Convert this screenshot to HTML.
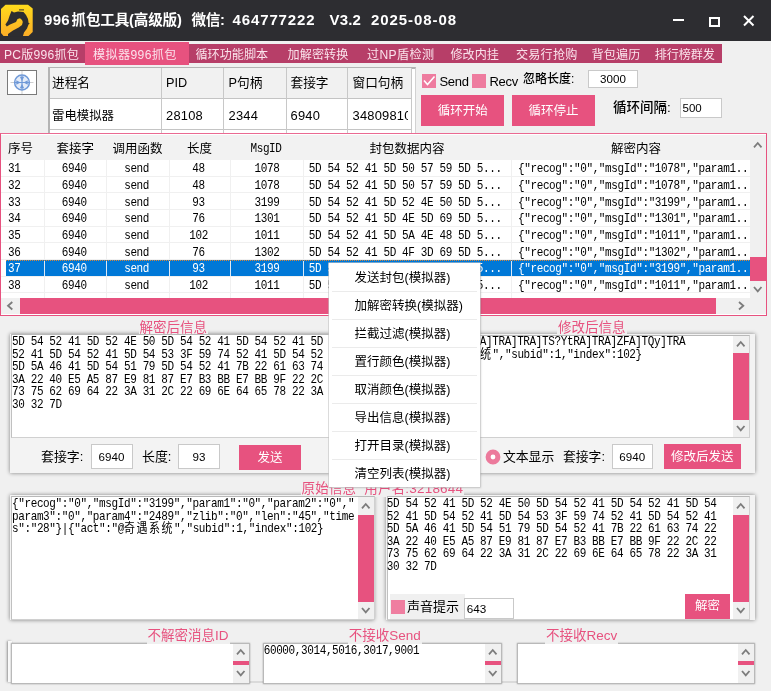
<!DOCTYPE html>
<html lang="zh-CN"><head><meta charset="utf-8"><title>996抓包工具</title>
<style>
html,body{margin:0;padding:0;}
body{will-change:transform;width:771px;height:691px;overflow:hidden;background:#f0f0f0;position:relative;font-family:"Liberation Sans","Noto Sans CJK SC",sans-serif;}
.t{position:absolute;white-space:pre;line-height:16px;height:16px;color:#000;}
.ui{font-size:12.5px;}
.mono{font-family:"Liberation Mono","Noto Sans CJK SC",monospace;font-size:11px;letter-spacing:-0.38px;line-height:12.5px;height:12.5px;transform:scaleY(1.14);}
.mono .cj{letter-spacing:1.5px;font-size:11px;}
.pink{color:#e7527f;}
.w{color:#fff;}
.btn{position:absolute;background:#e7527f;color:#fff;text-align:center;font-size:12.5px;}
.inp{position:absolute;background:#fff;border:1px solid #c9c9c9;box-sizing:border-box;font-size:11.6px;}
.ta{position:absolute;background:#fff;box-sizing:border-box;border:1px solid #d0d0d0;border-top-color:#b8b8b8;border-left-color:#c0c0c0;}
.sb{position:absolute;background:#f0f0f0;}
.th{position:absolute;background:#e7527f;}
</style></head><body>

<div style="position:absolute;left:0px;top:0px;width:771px;height:41px;background:#2d2d31;"></div>
<svg style="position:absolute;left:0px;top:0px" width="36" height="41" viewBox="0 0 36 41">
<defs><linearGradient id="g" x1="0" y1="0" x2="0" y2="1"><stop offset="0" stop-color="#ffdb1c"/><stop offset="1" stop-color="#fbad27"/></linearGradient></defs>
<path d="M5.5 4.7 H28 L32.7 8.5 V32 L28.5 36 H3.5 L1 33 V9 Z" fill="url(#g)"/>
<path d="M11.5 11 L14 12.6 L18 11.5 L23.5 12 L26 15 L28 19 L28.6 23 L29.8 23.6 L28.5 24.6 L27 28.5 L24 32.5 L22.8 36.6 H8 V34 L13 30.5 L18.7 27.5 L22 25 L22.8 22 L22 20 L20 18.2 L17.5 19 L16 22 L10 24.6 L6.8 26.6 L5.4 24.6 L8 20.5 L9.5 16 Z" fill="#2d2d31"/>
<rect x="19" y="9.4" width="5" height="1" fill="#2d2d31"/>
</svg>
<div class="t" style="left:44px;top:9px;height:22px;line-height:22px;color:#fff;font-weight:bold;font-size:15px;letter-spacing:0.33px;">996</div>
<div class="t" style="left:71.5px;top:9px;height:22px;line-height:22px;color:#fff;font-weight:bold;font-size:14.6px;letter-spacing:-0.2px;">抓包工具(高级版)</div>
<div class="t" style="left:191.5px;top:9px;height:22px;line-height:22px;color:#fff;font-weight:bold;font-size:14.6px;letter-spacing:-0.4px;">微信:</div>
<div class="t" style="left:232.5px;top:9px;height:22px;line-height:22px;color:#fff;font-weight:bold;font-size:15px;letter-spacing:0.88px;">464777222</div>
<div class="t" style="left:329.5px;top:9px;height:22px;line-height:22px;color:#fff;font-weight:bold;font-size:15px;letter-spacing:0.16px;">V3.2</div>
<div class="t" style="left:371px;top:9px;height:22px;line-height:22px;color:#fff;font-weight:bold;font-size:15px;letter-spacing:0.93px;">2025-08-08</div>
<div style="position:absolute;left:673px;top:18.8px;width:11px;height:2.6px;background:#fff;"></div>
<div style="position:absolute;left:708.5px;top:17px;width:11px;height:10px;border:2px solid #fff;box-sizing:border-box;"></div>
<svg style="position:absolute;left:741.5px;top:14px" width="14" height="14"><path d="M2 2 L11.5 11.5 M11.5 2 L2 11.5" stroke="#fff" stroke-width="2" fill="none"/></svg>
<div style="position:absolute;left:0px;top:41px;width:771px;height:3px;background:#f0f0f0;"></div>
<div style="position:absolute;left:0px;top:44px;width:722px;height:19px;background:#b73e68;"></div>
<div style="position:absolute;left:85px;top:42px;width:104px;height:23px;background:#e7527f;"></div>
<div class="t ui" style="left:4px;top:46.8px;color:#fbe3ec;font-size:12.1px;letter-spacing:0.22px;">PC版996抓包</div>
<div class="t ui" style="left:93px;top:46.8px;color:#fbe3ec;font-size:12.1px;letter-spacing:0.4px;">模拟器996抓包</div>
<div class="t ui" style="left:195.5px;top:46.8px;color:#fbe3ec;font-size:12.1px;letter-spacing:0px;">循环功能脚本</div>
<div class="t ui" style="left:287.5px;top:46.8px;color:#fbe3ec;font-size:12.1px;letter-spacing:0.1px;">加解密转换</div>
<div class="t ui" style="left:367px;top:46.8px;color:#fbe3ec;font-size:12.1px;letter-spacing:0.38px;">过NP盾检测</div>
<div class="t ui" style="left:450.5px;top:46.8px;color:#fbe3ec;font-size:12.1px;letter-spacing:0px;">修改内挂</div>
<div class="t ui" style="left:516px;top:46.8px;color:#fbe3ec;font-size:12.1px;letter-spacing:0.2px;">交易行抢购</div>
<div class="t ui" style="left:591.6px;top:46.8px;color:#fbe3ec;font-size:12.1px;letter-spacing:0.15px;">背包遍历</div>
<div class="t ui" style="left:654.8px;top:46.8px;color:#fbe3ec;font-size:12.1px;letter-spacing:-0.1px;">排行榜群发</div>
<div style="position:absolute;left:7.3px;top:70px;width:29.4px;height:24.7px;background:#fff;border:1px solid #7a7a7a;box-sizing:border-box;"></div>
<svg style="position:absolute;left:8px;top:71px" width="27" height="23" viewBox="0 0 27 23">
<line x1="2.5" y1="11.5" x2="25.5" y2="11.5" stroke="#cfcfcf" stroke-width="1"/><line x1="14" y1="0" x2="14" y2="23" stroke="#cfcfcf" stroke-width="1"/>
<circle cx="14" cy="11.5" r="7.4" fill="#e4ecf8" stroke="#6f99d8" stroke-width="1.5"/>
<path d="M14 4.5 V18.5 M7 11.5 H21" stroke="#6f99d8" stroke-width="1.2"/>
<path d="M14 10 l-2.2 -4.2 h4.4 z M14 13 l-2.2 4.2 h4.4 z M12.5 11.5 l-4.2 -2.2 v4.4 z M15.5 11.5 l4.2 -2.2 v4.4 z" fill="#6f99d8"/>
</svg>
<div style="position:absolute;left:48.3px;top:67px;width:367.7px;height:66.5px;background:#fff;border:2px solid #b4b4b4;border-bottom:none;border-right:1px solid #d2d2d2;box-sizing:border-box;"></div>
<div style="position:absolute;left:50px;top:68px;width:361px;height:30px;background:#f1f1f1;"></div>
<div style="position:absolute;left:50px;top:98px;width:361px;height:1px;background:#c4c4c4;"></div>
<div style="position:absolute;left:50px;top:129.3px;width:361px;height:1px;background:#c4c4c4;"></div>
<div style="position:absolute;left:160.7px;top:68px;width:1px;height:65.5px;background:#c8c8c8;"></div>
<div style="position:absolute;left:223px;top:68px;width:1px;height:65.5px;background:#c8c8c8;"></div>
<div style="position:absolute;left:285.5px;top:68px;width:1px;height:65.5px;background:#c8c8c8;"></div>
<div style="position:absolute;left:347px;top:68px;width:1px;height:65.5px;background:#c8c8c8;"></div>
<div style="position:absolute;left:410.5px;top:68px;width:1px;height:65.5px;background:#c8c8c8;"></div>
<div class="t ui" style="left:52px;top:75px;font-size:12.7px;">进程名</div>
<div class="t ui" style="left:52px;top:107.7px;font-size:12.9px;letter-spacing:0.22px;overflow:hidden;max-width:355.5px;"><span style="font-size:12.4px;letter-spacing:0">雷电模拟器</span></div>
<div class="t ui" style="left:166px;top:75px;font-size:12.7px;">PID</div>
<div class="t ui" style="left:166px;top:107.7px;font-size:12.9px;letter-spacing:0.22px;overflow:hidden;max-width:241.5px;">28108</div>
<div class="t ui" style="left:228.5px;top:75px;font-size:12.7px;">P句柄</div>
<div class="t ui" style="left:228.5px;top:107.7px;font-size:12.9px;letter-spacing:0.22px;overflow:hidden;max-width:179.0px;">2344</div>
<div class="t ui" style="left:290.5px;top:75px;font-size:12.7px;">套接字</div>
<div class="t ui" style="left:290.5px;top:107.7px;font-size:12.9px;letter-spacing:0.22px;overflow:hidden;max-width:117.0px;">6940</div>
<div class="t ui" style="left:352.5px;top:75px;font-size:12.7px;">窗口句柄</div>
<div class="t ui" style="left:352.5px;top:107.7px;font-size:12.9px;letter-spacing:0.22px;overflow:hidden;max-width:55.0px;">34809810</div>
<div style="position:absolute;left:422px;top:73.5px;width:14.3px;height:14.3px;background:#ee7c9f;"></div>
<svg style="position:absolute;left:422px;top:74px" width="14" height="14"><path d="M2 6.5 L5.5 10.5 L12.5 2.5" stroke="#fff" stroke-width="1.6" fill="none"/></svg>
<div class="t ui" style="left:439.5px;top:73.5px;font-size:13px;letter-spacing:-0.3px;">Send</div>
<div style="position:absolute;left:472px;top:73.5px;width:14.3px;height:14.3px;background:#ee7c9f;"></div>
<div class="t ui" style="left:489.5px;top:73.5px;font-size:13px;letter-spacing:-0.3px;">Recv</div>
<div class="t ui" style="left:523px;top:71px;font-size:12px;font-weight:500;">忽略长度:</div>
<div class="inp" style="left:588px;top:70px;width:50px;height:18px;line-height:16px;text-align:center;">3000</div>
<div class="btn" style="left:421px;top:95px;width:83.3px;height:30.7px;line-height:33px;">循环开始</div>
<div class="btn" style="left:512px;top:95px;width:83px;height:30.7px;line-height:33px;">循环停止</div>
<div class="t ui" style="left:613px;top:100px;font-size:13.5px;font-weight:500;">循环间隔:</div>
<div class="inp" style="left:680px;top:98px;width:42px;height:20px;line-height:18px;padding-left:1.5px;font-size:11.5px;">500</div>
<div style="position:absolute;left:0px;top:133px;width:767px;height:182.5px;background:#fff;border:1px solid #e7527f;border-top:1.5px solid #ea6a92;box-sizing:border-box;"></div>
<div style="position:absolute;left:1px;top:134.5px;width:749px;height:25.5px;background:#f2f2f2;"></div>
<div style="position:absolute;left:1px;top:176px;width:749px;height:1px;background:#f0f0f0;"></div>
<div style="position:absolute;left:1px;top:192px;width:749px;height:1px;background:#f0f0f0;"></div>
<div style="position:absolute;left:1px;top:209px;width:749px;height:1px;background:#f0f0f0;"></div>
<div style="position:absolute;left:1px;top:226px;width:749px;height:1px;background:#f0f0f0;"></div>
<div style="position:absolute;left:1px;top:242px;width:749px;height:1px;background:#f0f0f0;"></div>
<div style="position:absolute;left:1px;top:259px;width:749px;height:1px;background:#f0f0f0;"></div>
<div style="position:absolute;left:1px;top:276px;width:749px;height:1px;background:#f0f0f0;"></div>
<div style="position:absolute;left:1px;top:292px;width:749px;height:1px;background:#f0f0f0;"></div>
<div style="position:absolute;left:44.3px;top:160px;width:1px;height:138px;background:#f0f0f0;"></div>
<div style="position:absolute;left:106.3px;top:160px;width:1px;height:138px;background:#f0f0f0;"></div>
<div style="position:absolute;left:168.6px;top:160px;width:1px;height:138px;background:#f0f0f0;"></div>
<div style="position:absolute;left:230.3px;top:160px;width:1px;height:138px;background:#f0f0f0;"></div>
<div style="position:absolute;left:302.7px;top:160px;width:1px;height:138px;background:#f0f0f0;"></div>
<div style="position:absolute;left:510.5px;top:160px;width:1px;height:138px;background:#f0f0f0;"></div>
<div style="position:absolute;left:6px;top:260px;width:744px;height:15.8px;background:#0078d7;"></div>
<div style="position:absolute;left:44.3px;top:260px;width:1px;height:15.8px;background:#dce9f7;"></div>
<div style="position:absolute;left:106.3px;top:260px;width:1px;height:15.8px;background:#dce9f7;"></div>
<div style="position:absolute;left:168.6px;top:260px;width:1px;height:15.8px;background:#dce9f7;"></div>
<div style="position:absolute;left:230.3px;top:260px;width:1px;height:15.8px;background:#dce9f7;"></div>
<div style="position:absolute;left:302.7px;top:260px;width:1px;height:15.8px;background:#dce9f7;"></div>
<div style="position:absolute;left:510.5px;top:260px;width:1px;height:15.8px;background:#dce9f7;"></div>
<div style="position:absolute;left:6px;top:260px;width:744px;height:1px;background:repeating-linear-gradient(90deg,#d8873a 0 1px,#0078d7 1px 2px);"></div>
<div class="t ui" style="left:8px;top:140.5px;">序号</div>
<div class="t ui" style="left:-74.7px;width:300px;text-align:center;top:140.5px;">套接字</div>
<div class="t ui" style="left:-12.599999999999994px;width:300px;text-align:center;top:140.5px;">调用函数</div>
<div class="t ui" style="left:49.400000000000006px;width:300px;text-align:center;top:140.5px;">长度</div>
<div class="t ui" style="left:257px;width:300px;text-align:center;top:140.5px;">封包数据内容</div>
<div class="t ui" style="left:486px;width:300px;text-align:center;top:140.5px;">解密内容</div>
<div class="t mono" style="left:116px;width:300px;text-align:center;top:142.5px;">MsgID</div>
<div class="t mono" style="left:8px;top:163.4px;">31</div>
<div class="t mono" style="left:-75.8px;width:300px;text-align:center;top:163.4px;">6940</div>
<div class="t mono" style="left:-13.400000000000006px;width:300px;text-align:center;top:163.4px;">send</div>
<div class="t mono" style="left:48.599999999999994px;width:300px;text-align:center;top:163.4px;">48</div>
<div class="t mono" style="left:117px;width:300px;text-align:center;top:163.4px;">1078</div>
<div class="t mono" style="left:308.8px;top:163.4px;">5D 54 52 41 5D 50 57 59 5D 5...</div>
<div class="t mono" style="left:518px;top:163.4px;">{"recog":"0","msgId":"1078","param1..</div>
<div class="t mono" style="left:8px;top:180.06666666666666px;">32</div>
<div class="t mono" style="left:-75.8px;width:300px;text-align:center;top:180.06666666666666px;">6940</div>
<div class="t mono" style="left:-13.400000000000006px;width:300px;text-align:center;top:180.06666666666666px;">send</div>
<div class="t mono" style="left:48.599999999999994px;width:300px;text-align:center;top:180.06666666666666px;">48</div>
<div class="t mono" style="left:117px;width:300px;text-align:center;top:180.06666666666666px;">1078</div>
<div class="t mono" style="left:308.8px;top:180.06666666666666px;">5D 54 52 41 5D 50 57 59 5D 5...</div>
<div class="t mono" style="left:518px;top:180.06666666666666px;">{"recog":"0","msgId":"1078","param1..</div>
<div class="t mono" style="left:8px;top:196.73333333333335px;">33</div>
<div class="t mono" style="left:-75.8px;width:300px;text-align:center;top:196.73333333333335px;">6940</div>
<div class="t mono" style="left:-13.400000000000006px;width:300px;text-align:center;top:196.73333333333335px;">send</div>
<div class="t mono" style="left:48.599999999999994px;width:300px;text-align:center;top:196.73333333333335px;">93</div>
<div class="t mono" style="left:117px;width:300px;text-align:center;top:196.73333333333335px;">3199</div>
<div class="t mono" style="left:308.8px;top:196.73333333333335px;">5D 54 52 41 5D 52 4E 50 5D 5...</div>
<div class="t mono" style="left:518px;top:196.73333333333335px;">{"recog":"0","msgId":"3199","param1..</div>
<div class="t mono" style="left:8px;top:213.4px;">34</div>
<div class="t mono" style="left:-75.8px;width:300px;text-align:center;top:213.4px;">6940</div>
<div class="t mono" style="left:-13.400000000000006px;width:300px;text-align:center;top:213.4px;">send</div>
<div class="t mono" style="left:48.599999999999994px;width:300px;text-align:center;top:213.4px;">76</div>
<div class="t mono" style="left:117px;width:300px;text-align:center;top:213.4px;">1301</div>
<div class="t mono" style="left:308.8px;top:213.4px;">5D 54 52 41 5D 4E 5D 69 5D 5...</div>
<div class="t mono" style="left:518px;top:213.4px;">{"recog":"0","msgId":"1301","param1..</div>
<div class="t mono" style="left:8px;top:230.0666666666667px;">35</div>
<div class="t mono" style="left:-75.8px;width:300px;text-align:center;top:230.0666666666667px;">6940</div>
<div class="t mono" style="left:-13.400000000000006px;width:300px;text-align:center;top:230.0666666666667px;">send</div>
<div class="t mono" style="left:48.599999999999994px;width:300px;text-align:center;top:230.0666666666667px;">102</div>
<div class="t mono" style="left:117px;width:300px;text-align:center;top:230.0666666666667px;">1011</div>
<div class="t mono" style="left:308.8px;top:230.0666666666667px;">5D 54 52 41 5D 5A 4E 48 5D 5...</div>
<div class="t mono" style="left:518px;top:230.0666666666667px;">{"recog":"0","msgId":"1011","param1..</div>
<div class="t mono" style="left:8px;top:246.73333333333335px;">36</div>
<div class="t mono" style="left:-75.8px;width:300px;text-align:center;top:246.73333333333335px;">6940</div>
<div class="t mono" style="left:-13.400000000000006px;width:300px;text-align:center;top:246.73333333333335px;">send</div>
<div class="t mono" style="left:48.599999999999994px;width:300px;text-align:center;top:246.73333333333335px;">76</div>
<div class="t mono" style="left:117px;width:300px;text-align:center;top:246.73333333333335px;">1302</div>
<div class="t mono" style="left:308.8px;top:246.73333333333335px;">5D 54 52 41 5D 4F 3D 69 5D 5...</div>
<div class="t mono" style="left:518px;top:246.73333333333335px;">{"recog":"0","msgId":"1302","param1..</div>
<div class="t mono w" style="left:8px;top:263.4px;">37</div>
<div class="t mono w" style="left:-75.8px;width:300px;text-align:center;top:263.4px;">6940</div>
<div class="t mono w" style="left:-13.400000000000006px;width:300px;text-align:center;top:263.4px;">send</div>
<div class="t mono w" style="left:48.599999999999994px;width:300px;text-align:center;top:263.4px;">93</div>
<div class="t mono w" style="left:117px;width:300px;text-align:center;top:263.4px;">3199</div>
<div class="t mono w" style="left:308.8px;top:263.4px;">5D 54 52 41 5D 52 4E 50 5D 5...</div>
<div class="t mono w" style="left:518px;top:263.4px;">{"recog":"0","msgId":"3199","param1..</div>
<div class="t mono" style="left:8px;top:280.06666666666666px;">38</div>
<div class="t mono" style="left:-75.8px;width:300px;text-align:center;top:280.06666666666666px;">6940</div>
<div class="t mono" style="left:-13.400000000000006px;width:300px;text-align:center;top:280.06666666666666px;">send</div>
<div class="t mono" style="left:48.599999999999994px;width:300px;text-align:center;top:280.06666666666666px;">102</div>
<div class="t mono" style="left:117px;width:300px;text-align:center;top:280.06666666666666px;">1011</div>
<div class="t mono" style="left:308.8px;top:280.06666666666666px;">5D 54 52 41 5D 5A 4E 48 5D 5...</div>
<div class="t mono" style="left:518px;top:280.06666666666666px;">{"recog":"0","msgId":"1011","param1..</div>
<div class="sb" style="left:750px;top:134.5px;width:16px;height:164px;"></div>
<div class="th" style="left:750px;top:257px;width:16px;height:23.5px;"></div>
<svg style="position:absolute;left:753.25px;top:141.85px;overflow:visible" width="9.5" height="6.3"><polyline transform="translate(1,1)" points="0,4.3 3.75,0 7.5,4.3" fill="none" stroke="#7c7c7c" stroke-width="1.8"/></svg>
<svg style="position:absolute;left:753.25px;top:285.85px;overflow:visible" width="9.5" height="6.3"><polyline transform="translate(1,1)" points="0,0 3.75,4.3 7.5,0" fill="none" stroke="#7c7c7c" stroke-width="1.8"/></svg>
<div class="sb" style="left:1px;top:298px;width:765px;height:16px;"></div>
<div class="th" style="left:20px;top:298px;width:696px;height:15.8px;"></div>
<svg style="position:absolute;left:7.35px;top:301.25px;overflow:visible" width="6.3" height="9.5"><polyline transform="translate(1,1)" points="4.3,0 0,3.75 4.3,7.5" fill="none" stroke="#7c7c7c" stroke-width="1.8"/></svg>
<svg style="position:absolute;left:737.85px;top:301.25px;overflow:visible" width="6.3" height="9.5"><polyline transform="translate(1,1)" points="0,0 4.3,3.75 0,7.5" fill="none" stroke="#7c7c7c" stroke-width="1.8"/></svg>
<div style="position:absolute;left:10px;top:333.5px;width:364px;height:139.5px;background:#f3f3f3;box-shadow:0 0 4px rgba(0,0,0,0.48);"></div>
<div style="position:absolute;left:386px;top:334px;width:368.5px;height:139px;background:#f3f3f3;box-shadow:0 0 4px rgba(0,0,0,0.48);"></div>
<div class="t ui pink" style="left:138.5px;top:319.6px;font-size:13.5px;background:#f0f0f0;padding:0 1px;">解密后信息</div>
<div class="t ui pink" style="left:557px;top:319.6px;font-size:13.5px;background:#f0f0f0;padding:0 1px;">修改后信息</div>
<div class="ta" style="left:11px;top:334px;width:363px;height:104px;"></div>
<div class="ta" style="left:387px;top:334.5px;width:363px;height:103.5px;"></div>
<div class="t mono" style="left:12px;top:336.3px;">5D 54 52 41 5D 52 4E 50 5D 54 52 41 5D 54 52 41 5D</div>
<div class="t mono" style="left:12px;top:348.8px;">52 41 5D 54 52 41 5D 54 53 3F 59 74 52 41 5D 54 52</div>
<div class="t mono" style="left:12px;top:361.3px;">5D 5A 46 41 5D 54 51 79 5D 54 52 41 7B 22 61 63 74</div>
<div class="t mono" style="left:12px;top:373.8px;">3A 22 40 E5 A5 87 E9 81 87 E7 B3 BB E7 BB 9F 22 2C</div>
<div class="t mono" style="left:12px;top:386.3px;">73 75 62 69 64 22 3A 31 2C 22 69 6E 64 65 78 22 3A</div>
<div class="t mono" style="left:12px;top:398.8px;">30 32 7D</div>
<div class="t mono" style="left:386.5px;top:336.3px;">]TRA]RNP]TRA]TRA]TRA]TRA]TS?YtRA]TRA]ZFA]TQy]TRA</div>
<div class="t mono" style="left:386.5px;top:348.8px;">{"act":"@<span class="cj">奇遇系统</span>","subid":1,"index":102}</div>
<div class="sb" style="left:733px;top:335.5px;width:16px;height:101.5px;"></div>
<div class="th" style="left:733px;top:353px;width:16px;height:66.5px;"></div>
<svg style="position:absolute;left:736.25px;top:340.85px;overflow:visible" width="9.5" height="6.3"><polyline transform="translate(1,1)" points="0,4.3 3.75,0 7.5,4.3" fill="none" stroke="#7c7c7c" stroke-width="1.8"/></svg>
<svg style="position:absolute;left:736.25px;top:424.85px;overflow:visible" width="9.5" height="6.3"><polyline transform="translate(1,1)" points="0,0 3.75,4.3 7.5,0" fill="none" stroke="#7c7c7c" stroke-width="1.8"/></svg>
<div class="t ui" style="left:41px;top:449px;font-size:12.9px;">套接字:</div>
<div class="inp" style="left:90.5px;top:444px;width:42px;height:25px;line-height:23px;text-align:center;">6940</div>
<div class="t ui" style="left:142px;top:449px;font-size:12.9px;">长度:</div>
<div class="inp" style="left:178px;top:444px;width:42px;height:25px;line-height:23px;text-align:center;">93</div>
<div class="btn" style="left:238.7px;top:445px;width:62.5px;height:25px;line-height:27px;">发送</div>
<svg style="position:absolute;left:485.2px;top:448.9px" width="16" height="16"><circle cx="8" cy="8" r="4.9" fill="#fff" stroke="#ec7a9c" stroke-width="5"/></svg>
<div class="t ui" style="left:503px;top:449px;font-size:12.8px;">文本显示</div>
<div class="t ui" style="left:563px;top:449px;font-size:12.8px;">套接字:</div>
<div class="inp" style="left:611.5px;top:443.8px;width:41.5px;height:25px;line-height:23px;text-align:center;">6940</div>
<div class="btn" style="left:663.5px;top:443.8px;width:77.5px;height:25px;line-height:26.5px;">修改后发送</div>
<div style="position:absolute;left:9.5px;top:495px;width:364.5px;height:125px;background:#f3f3f3;box-shadow:0 0 4px rgba(0,0,0,0.48);"></div>
<div style="position:absolute;left:385.5px;top:495px;width:369px;height:125px;background:#f3f3f3;box-shadow:0 0 4px rgba(0,0,0,0.48);"></div>
<div class="t ui pink" style="left:300.5px;top:480.5px;font-size:13.5px;letter-spacing:0.2px;background:#f0f0f0;padding:0 1px;">原始信息  用户名:3218644</div>
<div class="ta" style="left:10.5px;top:496px;width:364px;height:124px;"></div>
<div class="ta" style="left:387px;top:496px;width:363px;height:124px;"></div>
<div class="t mono" style="left:12px;top:498.3px;">{"recog":"0","msgId":"3199","param1":"0","param2":"0","</div>
<div class="t mono" style="left:12px;top:510.8px;">param3":"0","param4":"2489","zlib":"0","len":"45","time</div>
<div class="t mono" style="left:12px;top:523.3px;">s":"28"}|{"act":"@<span class="cj">奇遇系统</span>","subid":1,"index":102}</div>
<div class="sb" style="left:358px;top:497px;width:15.5px;height:122px;"></div>
<div class="th" style="left:358px;top:514.5px;width:15.5px;height:87.5px;"></div>
<svg style="position:absolute;left:361.25px;top:502.85px;overflow:visible" width="9.5" height="6.3"><polyline transform="translate(1,1)" points="0,4.3 3.75,0 7.5,4.3" fill="none" stroke="#7c7c7c" stroke-width="1.8"/></svg>
<svg style="position:absolute;left:361.25px;top:606.85px;overflow:visible" width="9.5" height="6.3"><polyline transform="translate(1,1)" points="0,0 3.75,4.3 7.5,0" fill="none" stroke="#7c7c7c" stroke-width="1.8"/></svg>
<div class="t mono" style="left:386.8px;top:498.3px;">5D 54 52 41 5D 52 4E 50 5D 54 52 41 5D 54 52 41 5D 54</div>
<div class="t mono" style="left:386.8px;top:510.8px;">52 41 5D 54 52 41 5D 54 53 3F 59 74 52 41 5D 54 52 41</div>
<div class="t mono" style="left:386.8px;top:523.3px;">5D 5A 46 41 5D 54 51 79 5D 54 52 41 7B 22 61 63 74 22</div>
<div class="t mono" style="left:386.8px;top:535.8px;">3A 22 40 E5 A5 87 E9 81 87 E7 B3 BB E7 BB 9F 22 2C 22</div>
<div class="t mono" style="left:386.8px;top:548.3px;">73 75 62 69 64 22 3A 31 2C 22 69 6E 64 65 78 22 3A 31</div>
<div class="t mono" style="left:386.8px;top:560.8px;">30 32 7D</div>
<div class="sb" style="left:733px;top:497px;width:16px;height:122px;"></div>
<div class="th" style="left:733px;top:514.5px;width:16px;height:87px;"></div>
<svg style="position:absolute;left:736.25px;top:502.85px;overflow:visible" width="9.5" height="6.3"><polyline transform="translate(1,1)" points="0,4.3 3.75,0 7.5,4.3" fill="none" stroke="#7c7c7c" stroke-width="1.8"/></svg>
<svg style="position:absolute;left:736.25px;top:606.85px;overflow:visible" width="9.5" height="6.3"><polyline transform="translate(1,1)" points="0,0 3.75,4.3 7.5,0" fill="none" stroke="#7c7c7c" stroke-width="1.8"/></svg>
<div style="position:absolute;left:389.5px;top:594px;width:75px;height:25px;background:#f0f0f0;"></div>
<div style="position:absolute;left:391px;top:599.5px;width:14px;height:14.5px;background:#ef7ea0;"></div>
<div class="t ui" style="left:407px;top:598.5px;font-size:13px;">声音提示</div>
<div class="inp" style="left:463.7px;top:598px;width:50px;height:20.5px;line-height:19px;padding-left:2px;font-size:11.7px;">643</div>
<div class="btn" style="left:685px;top:594px;width:45px;height:25px;line-height:25px;">解密</div>
<div style="position:absolute;left:7.5px;top:641px;width:4px;height:41px;background:#fafafa;box-shadow:-1px 0 2.5px rgba(0,0,0,0.4);"></div>
<div style="position:absolute;left:249px;top:681.3px;width:15px;height:2.2px;background:#dadada;"></div>
<div style="position:absolute;left:501.5px;top:681.3px;width:15.5px;height:2.2px;background:#dadada;"></div>
<div class="ta" style="left:11px;top:642.7px;width:239px;height:41.5px;border:1px solid #b9b9b9;box-shadow:0 0 1.5px rgba(0,0,0,0.35);"></div><div class="sb" style="left:233px;top:643.7px;width:16px;height:39.5px;"></div><div class="th" style="left:233px;top:661.2px;width:16px;height:4.3px;"></div><svg style="position:absolute;left:236.25px;top:649.15px;overflow:visible" width="9.5" height="6.3"><polyline transform="translate(1,1)" points="0,4.3 3.75,0 7.5,4.3" fill="none" stroke="#7c7c7c" stroke-width="1.8"/></svg><svg style="position:absolute;left:236.25px;top:670.45px;overflow:visible" width="9.5" height="6.3"><polyline transform="translate(1,1)" points="0,0 3.75,4.3 7.5,0" fill="none" stroke="#7c7c7c" stroke-width="1.8"/></svg>
<div class="ta" style="left:263px;top:642.7px;width:238.5px;height:41.5px;border:1px solid #b9b9b9;box-shadow:0 0 1.5px rgba(0,0,0,0.35);"></div><div class="sb" style="left:484.5px;top:643.7px;width:16px;height:39.5px;"></div><div class="th" style="left:484.5px;top:661.2px;width:16px;height:4.3px;"></div><svg style="position:absolute;left:487.75px;top:649.15px;overflow:visible" width="9.5" height="6.3"><polyline transform="translate(1,1)" points="0,4.3 3.75,0 7.5,4.3" fill="none" stroke="#7c7c7c" stroke-width="1.8"/></svg><svg style="position:absolute;left:487.75px;top:670.45px;overflow:visible" width="9.5" height="6.3"><polyline transform="translate(1,1)" points="0,0 3.75,4.3 7.5,0" fill="none" stroke="#7c7c7c" stroke-width="1.8"/></svg>
<div class="ta" style="left:516.5px;top:642.7px;width:238.5px;height:41.5px;border:1px solid #b9b9b9;box-shadow:0 0 1.5px rgba(0,0,0,0.35);"></div><div class="sb" style="left:738.0px;top:643.7px;width:16px;height:39.5px;"></div><div class="th" style="left:738.0px;top:661.2px;width:16px;height:4.3px;"></div><svg style="position:absolute;left:741.25px;top:649.15px;overflow:visible" width="9.5" height="6.3"><polyline transform="translate(1,1)" points="0,4.3 3.75,0 7.5,4.3" fill="none" stroke="#7c7c7c" stroke-width="1.8"/></svg><svg style="position:absolute;left:741.25px;top:670.45px;overflow:visible" width="9.5" height="6.3"><polyline transform="translate(1,1)" points="0,0 3.75,4.3 7.5,0" fill="none" stroke="#7c7c7c" stroke-width="1.8"/></svg>
<div class="t ui pink" style="left:146.5px;top:627.5px;font-size:13.5px;background:#f0f0f0;padding:0 1px;">不解密消息ID</div>
<div class="t ui pink" style="left:347.8px;top:627.5px;font-size:13.5px;background:#f0f0f0;padding:0 1px;">不接收Send</div>
<div class="t ui pink" style="left:545px;top:627.5px;font-size:13.5px;background:#f0f0f0;padding:0 1px;">不接收Recv</div>
<div class="t mono" style="left:263.7px;top:644.5px;">60000,3014,5016,3017,9001</div>
<div style="position:absolute;left:329px;top:263px;width:150.5px;height:223.5px;background:#fff;box-shadow:0 0 0 0.6px #c4c4c4,1px 1px 2px rgba(0,0,0,0.15);"></div>
<div class="t ui" style="left:354.5px;top:269.6px;">发送封包(模拟器)</div>
<div style="position:absolute;left:332px;top:290.6px;width:145px;height:1px;background:#ebebeb;"></div>
<div class="t ui" style="left:354.5px;top:297.6px;">加解密转换(模拟器)</div>
<div style="position:absolute;left:332px;top:318.70000000000005px;width:145px;height:1px;background:#ebebeb;"></div>
<div class="t ui" style="left:354.5px;top:325.6px;">拦截过滤(模拟器)</div>
<div style="position:absolute;left:332px;top:346.8px;width:145px;height:1px;background:#ebebeb;"></div>
<div class="t ui" style="left:354.5px;top:353.6px;">置行颜色(模拟器)</div>
<div style="position:absolute;left:332px;top:374.90000000000003px;width:145px;height:1px;background:#ebebeb;"></div>
<div class="t ui" style="left:354.5px;top:381.6px;">取消颜色(模拟器)</div>
<div style="position:absolute;left:332px;top:403.0px;width:145px;height:1px;background:#ebebeb;"></div>
<div class="t ui" style="left:354.5px;top:409.6px;">导出信息(模拟器)</div>
<div style="position:absolute;left:332px;top:431.1px;width:145px;height:1px;background:#ebebeb;"></div>
<div class="t ui" style="left:354.5px;top:437.6px;">打开目录(模拟器)</div>
<div style="position:absolute;left:332px;top:459.20000000000005px;width:145px;height:1px;background:#ebebeb;"></div>
<div class="t ui" style="left:354.5px;top:465.6px;">清空列表(模拟器)</div>
</body></html>
